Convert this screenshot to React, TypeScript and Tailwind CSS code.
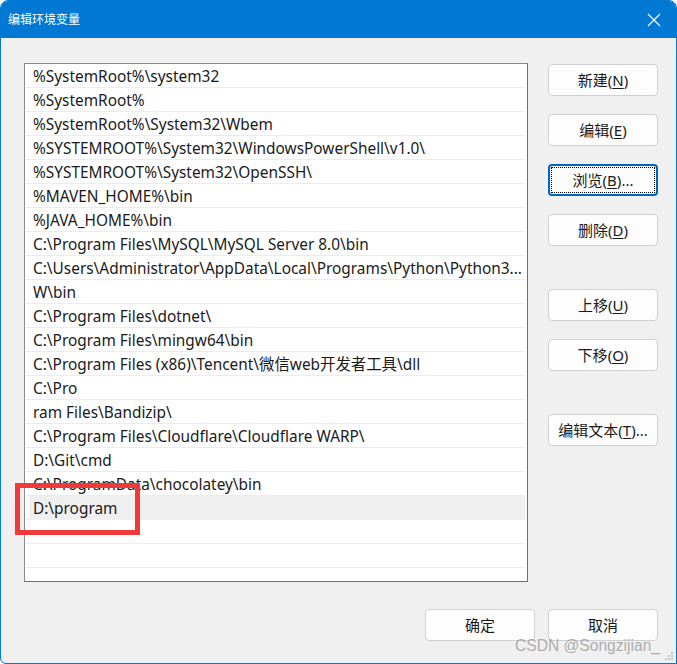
import React from "react";

const rows: string[] = [
  "%SystemRoot%\\system32",
  "%SystemRoot%",
  "%SystemRoot%\\System32\\Wbem",
  "%SYSTEMROOT%\\System32\\WindowsPowerShell\\v1.0\\",
  "%SYSTEMROOT%\\System32\\OpenSSH\\",
  "%MAVEN_HOME%\\bin",
  "%JAVA_HOME%\\bin",
  "C:\\Program Files\\MySQL\\MySQL Server 8.0\\bin",
  "C:\\Users\\Administrator\\AppData\\Local\\Programs\\Python\\Python3...",
  "W\\bin",
  "C:\\Program Files\\dotnet\\",
  "C:\\Program Files\\mingw64\\bin",
  "C:\\Program Files (x86)\\Tencent\\微信web开发者工具\\dll",
  "C:\\Pro",
  "ram Files\\Bandizip\\",
  "C:\\Program Files\\Cloudflare\\Cloudflare WARP\\",
  "D:\\Git\\cmd",
  "C:\\ProgramData\\chocolatey\\bin",
  "D:\\program",
  "",
  "",
];

const font = { fontFamily: '"Noto Sans", "Noto Sans CJK SC", sans-serif' };

function Btn({
  label,
  mn,
  suffix = "",
  focused = false,
  className = "",
}: {
  label: string;
  mn?: string;
  suffix?: string;
  focused?: boolean;
  className?: string;
}) {
  return (
    <div
      className={
        "w-[110px] h-[32px] rounded-[4px] bg-[#fdfdfd] flex items-center justify-center text-[15px] text-[#1a1a1a] " +
        (focused
          ? "border-2 border-[#0067c0] p-[1px] "
          : "border border-[#d0d0d0] ") +
        className
      }
    >
      <div
        className={
          "w-full h-full flex items-center justify-center " +
          (focused ? "border border-dotted border-black" : "")
        }
      >
        <span>
          {label}
          {mn ? (
            <>
              (<span className="underline underline-offset-2">{mn}</span>)
            </>
          ) : null}
          {suffix}
        </span>
      </div>
    </div>
  );
}

export default function App() {
  return (
    <div
      className="w-[677px] h-[664px] relative overflow-hidden rounded-t-[8px] rounded-bl-[6px] border border-[#0078d4] bg-[#f0f0f0] flex flex-col"
      style={font}
    >
      {/* title bar */}
      <div className="h-[37px] bg-[#0078d4] flex items-center justify-between pl-[7px] pr-[15px] shrink-0">
        <span className="text-white text-[12px] leading-none">编辑环境变量</span>
        <svg width="14" height="14" viewBox="0 0 14 14">
          <path d="M1 1 L13 13 M13 1 L1 13" stroke="white" strokeWidth="1.2" />
        </svg>
      </div>

      {/* body */}
      <div className="flex-1 flex flex-col pt-[25px] pl-[23px] pr-[18px]">
        <div className="flex gap-[20px]">
          {/* list */}
          <div className="w-[504px] h-[519px] bg-white border border-[#8a8a8a] border-r-[#6e6e6e] border-b-[#6e6e6e] pl-[1px] pr-[2px] overflow-hidden">
            {rows.map((r, i) => (
              <div
                key={i}
                className="h-[24px] border-b border-[#ececec] flex items-center pt-[3px] text-[15.4px] text-[#1a1a1a] whitespace-nowrap"
              >
                {i === 18 ? (
                  <div className="ml-[4px] -mt-[3px] h-[24px] flex-1 bg-[#efefef] flex items-center pt-[3px] pl-[3px]">{r}</div>
                ) : (
                  <span className="pl-[7px]">{r}</span>
                )}
              </div>
            ))}
          </div>

          {/* buttons */}
          <div className="flex flex-col pt-[1px]">
            <Btn label="新建" mn="N" />
            <Btn label="编辑" mn="E" className="mt-[18px]" />
            <Btn label="浏览" mn="B" suffix="..." focused className="mt-[18px]" />
            <Btn label="删除" mn="D" className="mt-[18px]" />
            <Btn label="上移" mn="U" className="mt-[43px]" />
            <Btn label="下移" mn="O" className="mt-[18px]" />
            <Btn label="编辑文本" mn="T" suffix="..." className="mt-[43px]" />
          </div>
        </div>

        <div className="flex justify-end gap-[13px] mt-[27px]">
          <Btn label="确定" />
          <Btn label="取消" />
        </div>
      </div>

      {/* red annotation box */}
      <div className="absolute left-[14px] top-[482px] w-[125px] h-[52px] border-[5px] border-[#f03a3a]" />

      {/* watermark */}
      <div className="absolute left-[514px] top-[633px] text-[15.6px] text-[#9a9a9a]/80 whitespace-nowrap" style={{ fontFamily: '"Liberation Sans", sans-serif' }}>
        CSDN @Songzijian_
      </div>

      {/* resize grip */}
      <svg className="absolute right-[2px] bottom-[2px]" width="10" height="10" viewBox="0 0 10 10">
        <rect x="7" y="1" width="2" height="2" fill="#c8c8c8" />
        <rect x="4" y="4" width="2" height="2" fill="#c8c8c8" />
        <rect x="7" y="4" width="2" height="2" fill="#c8c8c8" />
        <rect x="1" y="7" width="2" height="2" fill="#c8c8c8" />
        <rect x="4" y="7" width="2" height="2" fill="#c8c8c8" />
        <rect x="7" y="7" width="2" height="2" fill="#c8c8c8" />
      </svg>
    </div>
  );
}
